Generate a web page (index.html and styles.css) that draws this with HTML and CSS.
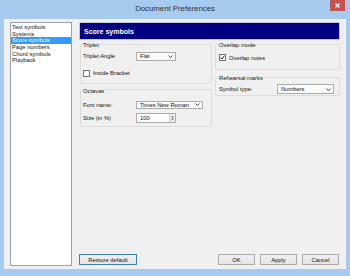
FILE: index.html
```html
<!DOCTYPE html>
<html lang="en">
<head>
    <meta charset="UTF-8">
    <title>Document Preferences</title>
    <link rel="stylesheet" href="styles.css">
</head>
<body>
    <div class="window">
        <div class="titlebar">
            <span class="title">Document Preferences</span>
            <span class="close">
                <svg width="5" height="5" viewBox="0 0 5 5"><path d="M0.5 0.5 L4.5 4.5 M4.5 0.5 L0.5 4.5" stroke="#fff" stroke-width="1.2"/></svg>
            </span>
        </div>

        <div class="client">
            <ul class="pages">
                <li>Text symbols</li>
                <li>Systems</li>
                <li class="selected">Score symbols</li>
                <li>Page numbers</li>
                <li>Chord symbols</li>
                <li>Playback</li>
            </ul>

            <div class="main">
                <div class="heading">Score symbols</div>

                <div class="settings">
                    <div class="col">
                        <fieldset class="group triplet">
                            <legend>Triplet</legend>
                            <div class="row">
                                <span class="label">Triplet Angle</span>
                                <div class="combo combo-flat">Flat<svg class="chev" width="5" height="3" viewBox="0 0 5 3"><path d="M0.5 0.5 L2.5 2.5 L4.5 0.5" fill="none" stroke="#333" stroke-width="0.9"/></svg></div>
                            </div>
                            <div class="check"><span class="box"></span>Inside Bracket</div>
                        </fieldset>

                        <fieldset class="group octavas">
                            <legend>Octavas</legend>
                            <div class="row">
                                <span class="label">Font name:</span>
                                <div class="combo combo-font">Times New Roman<svg class="chev" width="5" height="3" viewBox="0 0 5 3"><path d="M0.5 0.5 L2.5 2.5 L4.5 0.5" fill="none" stroke="#333" stroke-width="0.9"/></svg></div>
                            </div>
                            <div class="row row-size">
                                <span class="label">Size (in %)</span>
                                <div class="spin">
                                    <span class="spin-value">100</span>
                                    <span class="spin-btns">
                                        <svg width="6" height="8" viewBox="0 0 6 8"><path d="M1.5 3 L3 1.5 L4.5 3 Z M1.5 5 L3 6.5 L4.5 5 Z" fill="#333"/><path d="M0 4 H6" stroke="#c8c8c8" stroke-width="0.6"/></svg>
                                    </span>
                                </div>
                            </div>
                        </fieldset>
                    </div>

                    <div class="col">
                        <fieldset class="group overlap">
                            <legend>Overlap mode</legend>
                            <div class="check"><span class="box checked"><svg width="5" height="5" viewBox="0 0 5 5"><path d="M0.6 2.6 L2 4 L4.4 0.8" fill="none" stroke="#222" stroke-width="1"/></svg></span>Overlap notes</div>
                        </fieldset>

                        <fieldset class="group rehearsal">
                            <legend>Rehearsal marks</legend>
                            <div class="row">
                                <span class="label label-wide">Symbol type:</span>
                                <div class="combo combo-numbers">Numbers<svg class="chev" width="5" height="3" viewBox="0 0 5 3"><path d="M0.5 0.5 L2.5 2.5 L4.5 0.5" fill="none" stroke="#333" stroke-width="0.9"/></svg></div>
                            </div>
                        </fieldset>
                    </div>
                </div>

                <div class="buttons">
                    <button class="btn btn-default">Restore default</button>
                    <span class="spacer"></span>
                    <button class="btn">OK</button>
                    <button class="btn">Apply</button>
                    <button class="btn">Cancel</button>
                </div>
            </div>
        </div>
    </div>
</body>
</html>
```

FILE: styles.css
```css
* { box-sizing: border-box; }
body { margin: 0; background: #a7cbee; font-family: "Liberation Sans", Arial, sans-serif; font-size: 5.8px; color: #111; }

.window { width: 350px; height: 276px; display: flex; flex-direction: column; }
.titlebar { height: 19px; display: grid; grid-template-columns: 1fr auto 1fr; align-items: start; }
.title { grid-column: 2; font-size: 7.8px; color: #2e2e2e; padding-top: 3.5px; }
.close { grid-column: 3; justify-self: end; width: 15px; height: 11px; margin-right: 5px; background: #c75050; display: flex; align-items: center; justify-content: center; }

.client { flex: 1; margin: 0 4px 7px 4px; background: #f0f0f0; display: flex; gap: 7px; padding: 3px 6px 3px 6px; }

.pages { list-style: none; margin: 0; padding: 1px 0 0 0; width: 62px; background: #fff; border: 1px solid #9da1a8; }
.pages li { line-height: 6.7px; height: 6.7px; padding-left: 1px; white-space: nowrap; }
.pages li.selected { background: #3399ff; color: #fff; }

.main { flex: 1; display: flex; flex-direction: column; }
.heading { height: 18px; background: #000080; border: 1px solid #c4c8d8; color: #fff; font-weight: bold; font-size: 7px; padding-left: 4px; display: flex; align-items: center; }

.settings { display: grid; grid-template-columns: 132px 125px; column-gap: 3px; padding-left: 1px; }
.col { display: flex; flex-direction: column; }

.group { margin: 0; border: 1px solid #dcdcdc; border-radius: 2px; padding: 0 2px; min-width: 0; }
.group legend { padding: 2px 0 0 0; line-height: 6px; margin-left: 0; }
.triplet { padding-bottom: 6px; }
.octavas { margin-top: 2px; padding-bottom: 3px; }
.overlap { padding: 0 3px 8px; }
.rehearsal { margin-top: 3px; padding: 0 5px 1px 3px; }

.row { display: flex; align-items: center; }
.triplet .row { margin-top: 3.5px; }
.octavas .row { margin-top: 7px; }
.octavas .row-size { margin-top: 3.5px; }
.rehearsal .row { margin-top: 3px; }
.label { width: 53px; }
.label-wide { width: 58px; }

.combo { height: 9px; border: 1px solid #acacac; background: #fbfbfb; display: flex; align-items: center; justify-content: space-between; padding: 0 2px 0 3px; white-space: nowrap; }
.combo-flat { width: 40px; }
.combo-font { width: 67px; height: 8.5px; }
.combo-numbers { width: 57px; height: 10px; }

.spin { width: 40px; height: 10px; border: 1px solid #acacac; background: #fff; display: flex; align-items: center; justify-content: space-between; padding-left: 3px; }
.spin-btns { width: 6px; height: 8px; background: #ececec; border-left: 1px solid #d0d0d0; display: flex; }

.check { display: flex; align-items: center; gap: 3px; }
.triplet .check { margin-top: 9px; }
.overlap .check { margin-top: 6px; }
.box { width: 7px; height: 7px; border: 1px solid #707070; background: #fff; display: flex; align-items: center; justify-content: center; }

.buttons { margin-top: auto; margin-bottom: 1px; display: flex; gap: 5px; padding-right: 1px; }
.spacer { flex: 1; }
.btn { height: 11px; width: 37px; padding: 0; border: 1px solid #acacac; background: linear-gradient(#f0f0f0, #e5e5e5); font-family: inherit; font-size: 5.8px; color: #111; }
.btn-default { width: 58px; border-color: #3c7fb1; }
```
